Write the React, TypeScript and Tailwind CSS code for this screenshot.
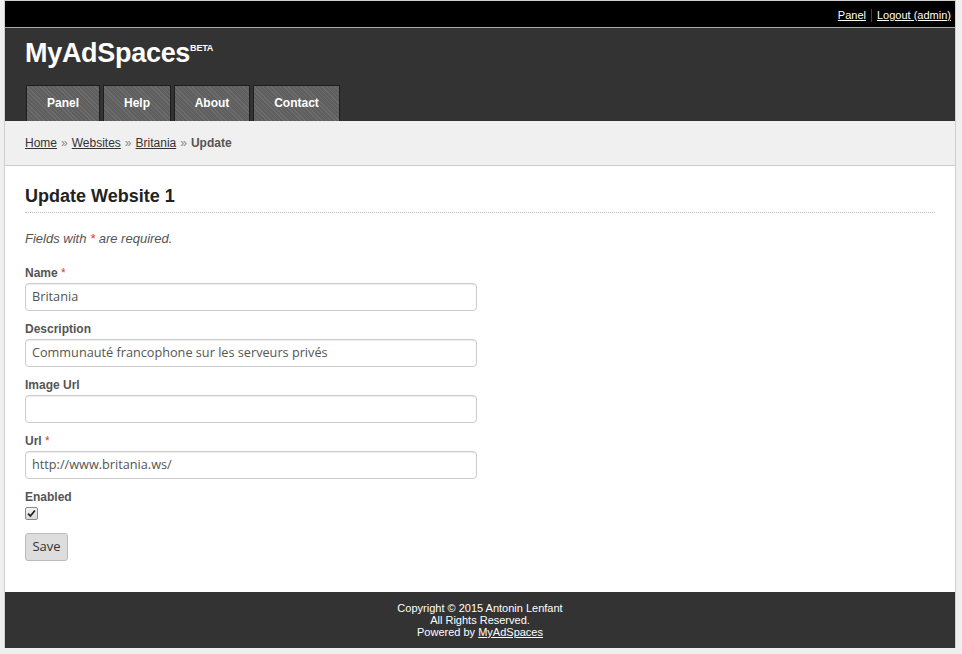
import React from "react";

const tabs = ["Panel", "Help", "About", "Contact"];
const tabWidths = ["w-[74px]", "w-[68px]", "w-[76px]", "w-[87px]"];

function Field({ label, required, value }: { label: string; required?: boolean; value: string }) {
  return (
    <div className="mb-[10px]">
      <div className="h-[16px] leading-[16px] text-[12px] font-bold text-[#555]">
        {label}
        {required && <span className="text-[#e33] font-normal"> *</span>}
      </div>
      <div className="mt-[2px] w-[452px] h-[28px] border border-[#ccc] rounded-[4px] shadow-[inset_0_1px_1px_rgba(0,0,0,0.075)] bg-white px-[6px] flex items-center text-[12.7px] text-[#555] font-['Open_Sans',sans-serif]">
        {value}
      </div>
    </div>
  );
}

export default function App() {
  return (
    <div className="bg-[#efefef] pl-[4px] pr-[6px] h-[654px] font-['Liberation_Sans',Arial,sans-serif]">
      <div className="border-l border-r border-t border-[#cfcfcf] bg-white">
        {/* top bar */}
        <div className="h-[26px] bg-black flex items-center justify-end pr-[4px] pt-[2px] text-[11px] text-white">
          <a className="underline">Panel</a>
          <span className="mx-[5px] w-px h-[13px] bg-[#444]" />
          <a className="underline">Logout (admin)</a>
        </div>
        <div className="h-px bg-[#aaa]" />
        {/* header */}
        <div className="bg-[#333] h-[93px] flex flex-col justify-between pl-[20px]">
          <div className="pt-[9px] flex items-start text-white font-bold">
            <span className="text-[27px] leading-[32px] tracking-[-0.3px]">MyAdSpaces</span>
            <span className="text-[9px] leading-[10px] mt-[6px] tracking-[-0.2px]">BETA</span>
          </div>
          <div className="flex gap-[3px] pl-[1px]">
            {tabs.map((t, i) => (
              <div
                key={t}
                className={`${tabWidths[i]} h-[36px] pb-[2px] border border-b-0 border-[#1e1e1e] bg-[repeating-linear-gradient(45deg,#6c6c6c_0px,#6c6c6c_1px,#5f5f5f_1px,#5f5f5f_3px)] flex items-center justify-center text-white text-[12px] font-bold`}
              >
                {t}
              </div>
            ))}
          </div>
        </div>
        {/* breadcrumb */}
        <div className="h-[45px] bg-[#f0f0f0] border-b border-[#ccc] flex items-center pl-[20px] text-[12px] text-[#333]">
          <a className="underline">Home</a>
          <span className="text-[#888] mx-[4px]">»</span>
          <a className="underline">Websites</a>
          <span className="text-[#888] mx-[4px]">»</span>
          <a className="underline">Britania</a>
          <span className="text-[#888] mx-[4px]">»</span>
          <span className="font-bold text-[#555]">Update</span>
        </div>
        {/* content */}
        <div className="px-[20px] pt-[18px] pb-[31px]">
          <h2 className="text-[18px] leading-[24px] font-bold text-[#222] pb-[4px] border-b border-dotted border-[#bbb]">
            Update Website 1
          </h2>
          <p className="mt-[18px] text-[13px] leading-[16px] italic text-[#555]">
            Fields with <span className="text-[#e33]">*</span> are required.
          </p>
          <div className="mt-[18px]">
            <Field label="Name" required value="Britania" />
            <Field label="Description" value="Communauté francophone sur les serveurs privés" />
            <Field label="Image Url" value="" />
            <Field label="Url" required value="http://www.britania.ws/" />
            <div className="h-[16px] leading-[16px] text-[12px] font-bold text-[#555]">Enabled</div>
            <div className="mt-[2px] w-[13px] h-[13px] border border-[#8a8a8a] rounded-[2px] bg-[linear-gradient(#f4f4f4,#d8d8d8)] flex items-center justify-center">
              <svg width="9" height="9" viewBox="0 0 10 10">
                <path d="M1.2 5.2 L3.8 7.8 L8.8 1.6" stroke="#222" strokeWidth="2" fill="none" />
              </svg>
            </div>
            <button className="block mt-[13px] w-[43px] h-[28px] bg-[#ddd] border border-[#bbb] rounded-[3px] text-[13px] text-[#333] font-['Open_Sans',sans-serif]">
              Save
            </button>
          </div>
        </div>
        {/* footer */}
        <div className="bg-[#333] h-[56px] pt-[10px] text-center text-white text-[11px] leading-[12px]">
          <div>Copyright © 2015 Antonin Lenfant</div>
          <div>All Rights Reserved.</div>
          <div>
            Powered by <a className="underline">MyAdSpaces</a>
          </div>
        </div>
      </div>
    </div>
  );
}
